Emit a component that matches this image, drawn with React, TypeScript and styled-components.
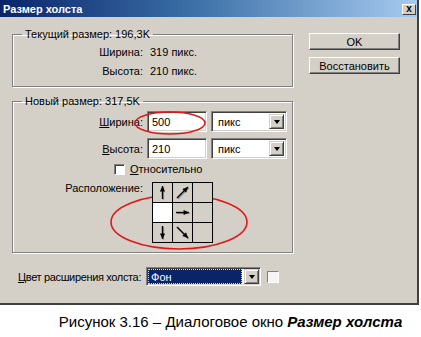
import React from 'react';
import styled, {createGlobalStyle} from 'styled-components';

const GlobalStyle = createGlobalStyle`
  body {
    margin: 0;
    background: #fff;
    font-family: "Liberation Sans", Arial, sans-serif;
  }
`;

const Page = styled.div`
  position: relative;
  width: 421px;
  height: 337px;
  overflow: hidden;
`;

const Dialog = styled.div`
  width: 419px;
  height: 305px;
  box-sizing: border-box;
  background: #d4d0c8;
  border-right: 2px solid #404040;
  border-bottom: 2px solid #404040;
  font-size: 11px;
  color: #000;
`;

const TitleBar = styled.div`
  height: 17px;
  display: flex;
  align-items: center;
  justify-content: space-between;
  padding: 0 1px 0 3px;
  background: linear-gradient(to right, #0a246a 0%, #3a6ea5 45%, #a6caf0 100%);
`;

const TitleText = styled.span`
  color: #fff;
  font-weight: bold;
  font-size: 11px;
`;

const CloseButton = styled.div`
  width: 14px;
  height: 11px;
  margin-top: 1px;
  box-sizing: border-box;
  background: #d4d0c8;
  border: 1px solid;
  border-color: #fff #404040 #404040 #fff;
  display: flex;
  align-items: center;
  justify-content: center;
  font-weight: bold;
  font-size: 10px;
  line-height: 1;
`;

const Body = styled.div`
  display: flex;
  padding: 11px 0 0 12px;
`;

const LeftColumn = styled.div`
  width: 282px;
  display: flex;
  flex-direction: column;
`;

const RightColumn = styled.div`
  display: flex;
  flex-direction: column;
  gap: 7px;
  margin-left: 15px;
  padding-top: 5px;
`;

const Button = styled.div`
  width: 91px;
  height: 17px;
  box-sizing: border-box;
  border: 1px solid;
  border-color: #fff #404040 #404040 #fff;
  box-shadow: inset -1px -1px 0 #808080;
  display: flex;
  align-items: center;
  justify-content: center;
`;

const Group = styled.fieldset<{$top?: number; $pad: string}>`
  margin: ${p => p.$top ?? 0}px 0 0 0;
  padding: ${p => p.$pad};
  border: 1px solid #808080;
  box-shadow: 1px 1px 0 #fff, inset 1px 1px 0 #fff;
  min-width: 0;
  width: 281px;
  box-sizing: border-box;
`;

const Legend = styled.legend`
  margin-left: 9px;
  padding: 0 3px;
  line-height: 13px;
`;

const InfoGrid = styled.div`
  display: grid;
  grid-template-columns: 130px auto;
  column-gap: 7px;
  row-gap: 6px;
  line-height: 13px;
`;

const Label = styled.span`
  text-align: right;
`;

const SizeGrid = styled.div`
  display: grid;
  grid-template-columns: 130px auto;
  column-gap: 4px;
  row-gap: 6px;
  align-items: center;
`;

const Field = styled.div<{$w: number}>`
  width: ${p => p.$w}px;
  height: 21px;
  box-sizing: border-box;
  background: #fff;
  border: 1px solid;
  border-color: #808080 #fff #fff #808080;
  box-shadow: inset 1px 1px 0 #404040, inset -1px -1px 0 #d4d0c8;
  display: flex;
  align-items: center;
  padding-left: 4px;
`;

const FieldRow = styled.div`
  display: flex;
  gap: 4px;
`;

const Select = styled(Field)`
  justify-content: space-between;
  padding: 2px;
  padding-left: 6px;
`;

const DropButton = styled.div`
  width: 15px;
  height: 15px;
  box-sizing: border-box;
  background: #d4d0c8;
  border: 1px solid;
  border-color: #d4d0c8 #404040 #404040 #d4d0c8;
  box-shadow: inset 1px 1px 0 #fff, inset -1px -1px 0 #808080;
  display: flex;
  align-items: center;
  justify-content: center;
`;

const Arrow = styled.span`
  width: 0;
  height: 0;
  border-left: 3.5px solid transparent;
  border-right: 3.5px solid transparent;
  border-top: 4px solid #000;
`;

const CheckRow = styled.label`
  display: flex;
  align-items: center;
  gap: 5px;
  margin: 4px 0 0 101px;
  line-height: 13px;
`;

const CheckBox = styled.span`
  width: 9px;
  height: 9px;
  background: #fff;
  border: 1px solid;
  border-color: #808080 #fff #fff #808080;
  box-shadow: inset 1px 1px 0 #404040;
`;

const AnchorRow = styled.div`
  display: flex;
  gap: 9px;
  margin-top: 6px;
  align-items: flex-start;
`;

const AnchorLabel = styled.span`
  width: 130px;
  text-align: right;
  line-height: 13px;
`;

const Anchor = styled.div`
  position: relative;
  z-index: 1;
  display: grid;
  grid-template-columns: repeat(3, 19px);
  grid-auto-rows: 19px;
  gap: 1px;
  padding: 1px;
  background: #000;
`;

const Cell = styled.div<{$selected?: boolean}>`
  background: ${p => (p.$selected ? '#fff' : '#d4d0c8')};
  display: flex;
  align-items: center;
  justify-content: center;
`;

const BottomRow = styled.div`
  display: flex;
  align-items: center;
  gap: 5px;
  margin: 14px 0 0 6px;
`;

const BottomLabel = styled.span`
  letter-spacing: -0.35px;
`;

const ColorSelect = styled(Field)`
  height: 19px;
  justify-content: space-between;
  padding: 1px;
`;

const ColorValue = styled.div`
  flex: 1;
  height: 100%;
  margin-right: 2px;
  box-sizing: border-box;
  background: #0a246a;
  color: #fff;
  outline: 1px dotted #e8d890;
  outline-offset: -1px;
  display: flex;
  align-items: center;
  padding-left: 3px;
`;

const Swatch = styled.div`
  width: 12px;
  height: 12px;
  margin-left: 1px;
  box-sizing: border-box;
  background: #f4f4f4;
  border: 1px solid;
  border-color: #808080 #fff #fff #808080;
`;

const Caption = styled.div`
  height: 32px;
  display: flex;
  align-items: center;
  justify-content: center;
  font-size: 15px;
  color: #000;
  padding-left: 40px;
`;

const Mark = styled.svg<{$x: number; $y: number; $z?: number}>`
  position: absolute;
  left: ${p => p.$x}px;
  top: ${p => p.$y}px;
  z-index: ${p => p.$z ?? 2};
  pointer-events: none;
`;

type Dir = 'n' | 'ne' | 'e' | 's' | 'se';

const arrowLines: Record<Dir, [number, number, number, number]> = {
  n: [9.5, 16, 9.5, 3],
  ne: [4, 15, 15, 4],
  e: [3, 9.5, 16, 9.5],
  s: [9.5, 3, 9.5, 16],
  se: [4, 4, 15, 15],
};

const AnchorArrow = ({dir}: {dir: Dir}) => {
  const [x1, y1, x2, y2] = arrowLines[dir];
  const ang = Math.atan2(y2 - y1, x2 - x1);
  const len = 6;
  const w = 0.45;
  const p1 = [x2 - len * Math.cos(ang - w), y2 - len * Math.sin(ang - w)];
  const p2 = [x2 - len * Math.cos(ang + w), y2 - len * Math.sin(ang + w)];
  return (
    <svg width="19" height="19" viewBox="0 0 19 19">
      <line x1={x1 + 1} y1={y1 + 1} x2={x2 + 1} y2={y2 + 1} stroke="#9a9a9a" strokeWidth="1.2" />
      <line x1={x1} y1={y1} x2={x2} y2={y2} stroke="#000" strokeWidth="1.4" />
      <polygon points={`${x2},${y2} ${p1[0]},${p1[1]} ${p2[0]},${p2[1]}`} fill="#000" />
    </svg>
  );
};

const anchorCells: (Dir | 'sel' | null)[] = ['n', 'ne', null, 'sel', 'e', null, 's', 'se', null];

const App = () => {
  return (
    <Page>
      <GlobalStyle />
      <Dialog>
        <TitleBar>
          <TitleText>Размер холста</TitleText>
          <CloseButton>x</CloseButton>
        </TitleBar>

        <Body>
          <LeftColumn>
            <Group $pad="5px 0 8px 0">
              <Legend>Текущий размер: 196,3K</Legend>
              <InfoGrid>
                <Label>Ширина:</Label>
                <span>319 пикс.</span>
                <Label>Высота:</Label>
                <span>210 пикс.</span>
              </InfoGrid>
            </Group>

            <Group $top={8} $pad="3px 0 9px 0">
              <Legend>Новый размер: 317,5K</Legend>
              <SizeGrid>
                <Label><u>Ш</u>ирина:</Label>
                <FieldRow>
                  <Field $w={60}>500</Field>
                  <Select $w={76}>пикс<DropButton><Arrow /></DropButton></Select>
                </FieldRow>
                <Label><u>В</u>ысота:</Label>
                <FieldRow>
                  <Field $w={60}>210</Field>
                  <Select $w={76}>пикс<DropButton><Arrow /></DropButton></Select>
                </FieldRow>
              </SizeGrid>

              <CheckRow>
                <CheckBox />
                <span><u>О</u>тносительно</span>
              </CheckRow>

              <AnchorRow>
                <AnchorLabel>Расположение:</AnchorLabel>
                <Anchor>
                  {anchorCells.map((c, i) => (
                    <Cell key={i} $selected={c === 'sel'}>
                      {c && c !== 'sel' && <AnchorArrow dir={c} />}
                    </Cell>
                  ))}
                </Anchor>
              </AnchorRow>
            </Group>

            <BottomRow>
              <BottomLabel><u>Ц</u>вет расширения холста:</BottomLabel>
              <ColorSelect $w={115}>
                <ColorValue>Фон</ColorValue>
                <DropButton><Arrow /></DropButton>
              </ColorSelect>
              <Swatch />
            </BottomRow>
          </LeftColumn>

          <RightColumn>
            <Button>OK</Button>
            <Button>Восстановить</Button>
          </RightColumn>
        </Body>
      </Dialog>

      <Caption>
        Рисунок 3.16 – Диалоговое окно&nbsp;<b><i>Размер холста</i></b>
      </Caption>

      <Mark $x={133} $y={110} width="74" height="26" viewBox="0 0 74 26">
        <ellipse cx="37" cy="13" rx="35" ry="11" fill="none" stroke="#e01818" strokeWidth="1.6" />
      </Mark>
      <Mark $x={108} $y={192} $z={0} width="142" height="60" viewBox="0 0 142 60">
        <ellipse cx="71" cy="30" rx="68" ry="27" fill="none" stroke="#e01818" strokeWidth="1.6" />
      </Mark>
    </Page>
  );
};

export default App;
